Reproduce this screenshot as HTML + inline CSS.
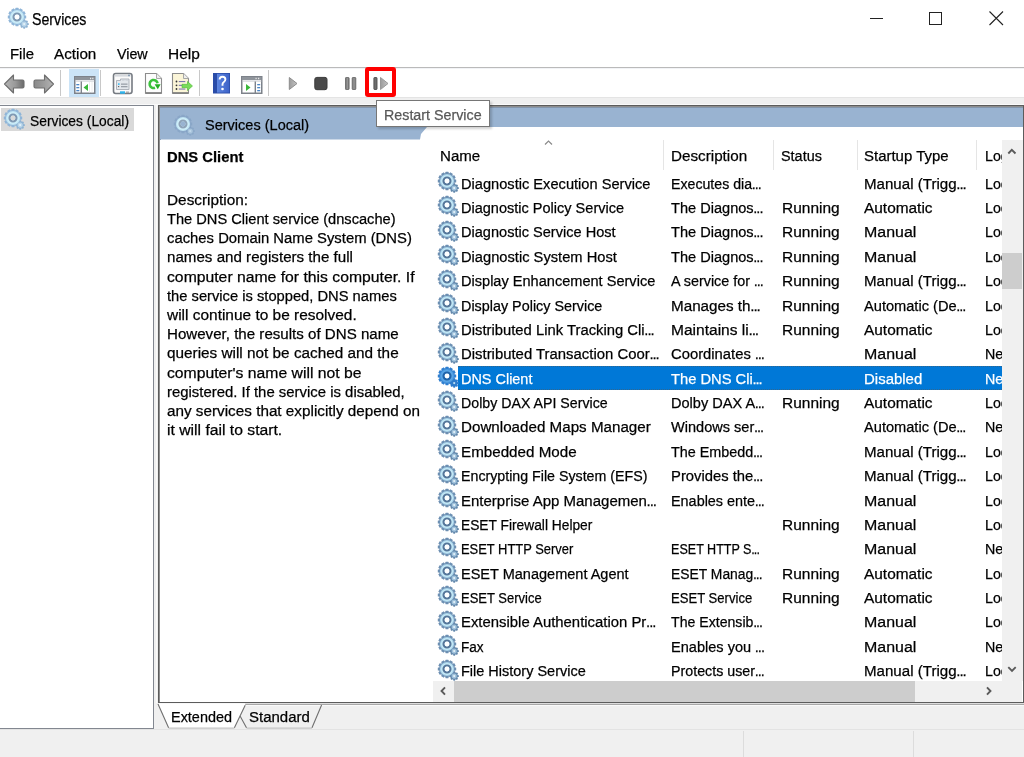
<!DOCTYPE html>
<html><head><meta charset="utf-8"><style>
.gS{--th:#2f7fd0;--sth:#2d7ccc;--sb:#2d7ccc;--sc:#bfe0f5;--rg:#4d9be0;--rg2:#5aa6e6;--dr:#1f62a8}
.gL{--th:#8fb5d8;--sth:#8fb3d3;--sb:#b9d6ea;--rg:#bfe3f3;--rg2:#cdeef9;--dr:#7f98b2}
.gF{--th:#7d9cc0;--to:0.55;--sth:#7f9fc2;--sb:#a9c4dc;--sc:#c0d8ea;--rg:#bfe2f2;--rg2:#d0f0fa;--dr:#8fa3b8}
*{margin:0;padding:0;box-sizing:border-box}
html,body{width:1024px;height:757px;overflow:hidden;background:#fff}
body{position:relative;font-family:"Liberation Sans",sans-serif;font-size:15px;color:#000}
.t{position:absolute;white-space:nowrap;line-height:17px;height:17px;-webkit-text-stroke:0.25px currentColor}
.a{position:absolute}
.el{letter-spacing:-1.1px;margin-left:-0.3px}
.t{transform-origin:0 0}
svg{position:absolute;overflow:visible}
</style></head><body>
<svg width="0" height="0" style="position:absolute">
<defs>
<radialGradient id="ring" cx="0.5" cy="0.5" r="0.5">
<stop offset="0.35" stop-color="#6e8fae"/><stop offset="0.55" stop-color="#cdebf7"/><stop offset="1" stop-color="#8db2d0"/>
</radialGradient>
<mask id="gh" maskUnits="userSpaceOnUse" x="-2" y="-2" width="24" height="24"><rect x="-2" y="-2" width="24" height="24" fill="#fff"/><circle cx="9" cy="9" r="2.4" fill="#000"/></mask>
<g id="gear" mask="url(#gh)">
<g style="fill:var(--th,#6c8fb2);opacity:var(--to,1)" transform="translate(9 9)"><circle r="7.9"/><rect x="-1.6" y="-9.2" width="3.2" height="18.4" rx="0.4" transform="rotate(0)"/><rect x="-1.6" y="-9.2" width="3.2" height="18.4" rx="0.4" transform="rotate(30)"/><rect x="-1.6" y="-9.2" width="3.2" height="18.4" rx="0.4" transform="rotate(60)"/><rect x="-1.6" y="-9.2" width="3.2" height="18.4" rx="0.4" transform="rotate(90)"/><rect x="-1.6" y="-9.2" width="3.2" height="18.4" rx="0.4" transform="rotate(120)"/><rect x="-1.6" y="-9.2" width="3.2" height="18.4" rx="0.4" transform="rotate(150)"/></g>
<g style="fill:var(--sth,#6287ab);opacity:var(--to,1)" transform="translate(16.2 16.1)"><circle r="3.6"/><rect x="-0.9" y="-4.6" width="1.8" height="9.2" transform="rotate(0)"/><rect x="-0.9" y="-4.6" width="1.8" height="9.2" transform="rotate(45)"/><rect x="-0.9" y="-4.6" width="1.8" height="9.2" transform="rotate(90)"/><rect x="-0.9" y="-4.6" width="1.8" height="9.2" transform="rotate(135)"/></g>
<circle cx="16.2" cy="16.1" r="2.6" style="fill:var(--sb,#9fc2dc)"/>
<circle cx="16.2" cy="16.1" r="1.1" style="fill:var(--sc,#e6f2f8)"/>
<circle cx="9" cy="9" r="7.1" style="fill:var(--rg,#a9d2ea)"/>
<circle cx="9" cy="9" r="6" style="fill:var(--rg2,#c6eaf7)"/>
<circle cx="9" cy="9" r="3.5" fill="none" style="stroke:var(--dr,#55769a)" stroke-width="2.1"/>
</g>
</defs></svg>
<svg style="left:7.5px;top:8px" width="20" height="20"><use href="#gear" class="gL"/></svg>
<div class="t " style="left:31.9px;top:11.26px;font-size:16px;transform:scaleX(0.887);">Services</div>
<div class="a" style="left:870px;top:18px;width:13px;height:1px;background:#222"></div>
<div class="a" style="left:929px;top:12px;width:13px;height:13px;border:1px solid #222"></div>
<svg style="left:989px;top:11px" width="15" height="15"><path d="M0.5 0.5L14 14M14 0.5L0.5 14" stroke="#222" stroke-width="1.1"/></svg>
<div class="t " style="left:10.3px;top:45.43px;font-size:15.5px;transform:scaleX(0.961);">File</div>
<div class="t " style="left:54.3px;top:45.43px;font-size:15.5px;transform:scaleX(0.983);">Action</div>
<div class="t " style="left:117.3px;top:45.43px;font-size:15.5px;transform:scaleX(0.921);">View</div>
<div class="t " style="left:167.6px;top:45.43px;font-size:15.5px;transform:scaleX(0.997);">Help</div>
<div class="a" style="left:0;top:67px;width:1024px;height:1px;background:#bababa"></div>
<div class="a" style="left:0;top:68px;width:1024px;height:1px;background:#f2f3f6"></div>
<div class="a" style="left:0;top:97px;width:1024px;height:8px;background:#efefef;border-top:1px solid #e4e4e4"></div>
<div class="a" style="left:60px;top:70px;width:1px;height:26px;background:#c8c8c8"></div>
<div class="a" style="left:100px;top:70px;width:1px;height:26px;background:#c8c8c8"></div>
<div class="a" style="left:199px;top:70px;width:1px;height:26px;background:#c8c8c8"></div>
<div class="a" style="left:268px;top:70px;width:1px;height:26px;background:#c8c8c8"></div>
<svg style="left:0;top:70px" width="60" height="27"><defs><linearGradient id="ab" x1="0" x2="1"><stop offset="0" stop-color="#b4b4b4"/><stop offset="0.55" stop-color="#9a9a9a"/><stop offset="1" stop-color="#6a6a6a"/></linearGradient><linearGradient id="af" x1="1" x2="0"><stop offset="0" stop-color="#b4b4b4"/><stop offset="0.55" stop-color="#9a9a9a"/><stop offset="1" stop-color="#8a8a8a"/></linearGradient></defs><path d="M4.5 14L13.5 5V10H22.5Q24 10 24 11.5V16.5Q24 18 22.5 18H13.5V23Z" fill="url(#ab)" stroke="#6e6e6e" stroke-width="1.1" stroke-linejoin="round"/><path d="M53.5 14L44.5 5V10H35.5Q34 10 34 11.5V16.5Q34 18 35.5 18H44.5V23Z" fill="url(#af)" stroke="#6e6e6e" stroke-width="1.1" stroke-linejoin="round"/></svg>
<div class="a" style="left:69px;top:69px;width:30px;height:28px;background:#cce4f7"></div>
<svg style="left:74px;top:76px" width="22" height="19"><rect x="0.75" y="0.75" width="20" height="16.5" fill="#fff" stroke="#7d828a" stroke-width="1.5"/><rect x="1" y="1" width="19.5" height="3" fill="#8f949b"/><rect x="16" y="1.8" width="1.2" height="1.4" fill="#e8e8e8"/><rect x="18.2" y="1.8" width="1.2" height="1.4" fill="#e8e8e8"/><rect x="1.5" y="4.6" width="19" height="0.9" fill="#c0c4ca"/><rect x="6.6" y="5.5" width="1.4" height="11.5" fill="#7d828a"/><rect x="2.3" y="8" width="3" height="1.3" fill="#4a86c8"/><rect x="2.3" y="11" width="3" height="1.3" fill="#4a86c8"/><rect x="2.3" y="14" width="3" height="1.3" fill="#4a86c8"/><path d="M9.5 11.5L14 8V15Z" fill="#3bb83b"/><path d="M15.5 6V16.5M18 6V16.5" stroke="#eaeaea" stroke-width="0.8"/></svg>
<svg style="left:112px;top:72px" width="22" height="23"><rect x="1.5" y="1.5" width="18.5" height="20" rx="2.2" fill="#fafafa" stroke="#767b82" stroke-width="1.6"/><rect x="3" y="3" width="15.5" height="1.6" fill="#d6d9de"/><rect x="16" y="2.6" width="2" height="1.6" fill="#8a9fb5"/><path d="M4.5 8.5H8.5V7H17V17.5H4.5Z" fill="#e3e7ec" stroke="#a7adb5" stroke-width="0.9"/><rect x="10" y="7.4" width="2.5" height="1.2" fill="#c9ced5"/><rect x="13.5" y="7.4" width="2.5" height="1.2" fill="#c9ced5"/><rect x="6" y="11.3" width="1.6" height="1.6" fill="#3bbcf5"/><rect x="9" y="11.5" width="6.5" height="1.3" fill="#9aa0a8"/><rect x="6" y="14.1" width="1.2" height="1" fill="#555"/><rect x="9" y="14" width="6.5" height="1.3" fill="#9aa0a8"/><rect x="8" y="19.3" width="5" height="2.4" fill="#2fb4ec"/><rect x="14" y="19.5" width="3" height="1.5" fill="#aaa"/></svg>
<svg style="left:144px;top:72px" width="20" height="23"><path d="M1.5 1.5H12.5L17.5 6.5V21.3H1.5Z" fill="#fdfdfd" stroke="#8c8c8c" stroke-width="1.1"/><path d="M1.5 21H17.5" stroke="#7a7a7a" stroke-width="1.6"/><path d="M12.5 1.5V6.5H17.5" fill="#eee" stroke="#a0a0a0" stroke-width="0.9"/><path d="M10.97 15.76A4 4 0 1 1 13.54 11.3" fill="none" stroke="#3cc23c" stroke-width="2.6"/><path d="M10.6 12.2H16.6L13.8 17.2Z" fill="#22b022"/></svg>
<svg style="left:171px;top:72px" width="24" height="23"><path d="M1.5 1.5H12.5L17.5 6.5V21.3H1.5Z" fill="#fbf5d8" stroke="#8c8c8c" stroke-width="1.1"/><path d="M1.5 21H17.5" stroke="#7a7a7a" stroke-width="1.6"/><path d="M12.5 1.5V6.5H17.5" fill="#eee" stroke="#a0a0a0" stroke-width="0.9"/><circle cx="5.5" cy="9.5" r="0.9" fill="#333"/><circle cx="5.5" cy="13.3" r="0.9" fill="#333"/><circle cx="5.5" cy="17" r="0.9" fill="#333"/><rect x="7.8" y="9" width="6.5" height="1.1" fill="#7b78b0"/><rect x="7.8" y="12.8" width="6.5" height="1.1" fill="#7b78b0"/><rect x="7.8" y="16.5" width="6.5" height="1.1" fill="#7b78b0"/><path d="M11 12.3H16.5V9.5L21.5 14L16.5 18.5V15.7H11Z" fill="#79dc5a" stroke="#4cb832" stroke-width="0.6"/></svg>
<svg style="left:213px;top:73px" width="17" height="21"><defs><linearGradient id="hb" x1="0" x2="1"><stop offset="0" stop-color="#5d86e0"/><stop offset="1" stop-color="#3d63c8"/></linearGradient></defs><rect x="0" y="0" width="17" height="20.5" fill="#2a4ca8"/><rect x="4" y="0.8" width="12.2" height="18.8" fill="url(#hb)"/><path d="M6.6 6.6Q6.6 3.7 9.5 3.7Q12.4 3.7 12.4 6.3Q12.4 8 10.6 9.3Q9.5 10 9.5 11.6V12.8" fill="none" stroke="#fff" stroke-width="1.9"/><circle cx="9.5" cy="16" r="1.3" fill="#fff"/></svg>
<svg style="left:241px;top:76px" width="22" height="19"><rect x="0.75" y="0.75" width="20" height="16.5" fill="#fff" stroke="#7d828a" stroke-width="1.5"/><rect x="1" y="1" width="19.5" height="3" fill="#8f949b"/><rect x="14.5" y="1.8" width="1.2" height="1.4" fill="#e8e8e8"/><rect x="17" y="1.8" width="1.2" height="1.4" fill="#e8e8e8"/><rect x="1.5" y="4.6" width="19" height="0.9" fill="#c0c4ca"/><rect x="13.6" y="5.5" width="1.4" height="11.5" fill="#7d828a"/><rect x="16.2" y="8" width="3" height="1.3" fill="#4a86c8"/><rect x="16.2" y="11" width="3" height="1.3" fill="#4a86c8"/><rect x="16.2" y="14" width="3" height="1.3" fill="#4a86c8"/><path d="M5 8V15L9.5 11.5Z" fill="#3bb83b"/></svg>
<svg style="left:280px;top:70px" width="120" height="27"><defs><linearGradient id="pg" x1="0" x2="1"><stop offset="0" stop-color="#9c9c9c"/><stop offset="1" stop-color="#c4c4c4"/></linearGradient><linearGradient id="pb" x1="0" x2="1"><stop offset="0" stop-color="#666"/><stop offset="0.5" stop-color="#9a9a9a"/><stop offset="1" stop-color="#6a6a6a"/></linearGradient></defs><path d="M9.3 7.5L17 13.5L9.3 19.5Z" fill="url(#pg)" stroke="#8d8d8d" stroke-width="1" stroke-linejoin="round"/><rect x="34.8" y="7.4" width="12.2" height="12.3" rx="2" fill="#4a4a4a" stroke="#3a3a3a" stroke-width="1"/><rect x="65.5" y="7.5" width="3.6" height="12" rx="0.6" fill="url(#pb)" stroke="#6d6d6d" stroke-width="0.9"/><rect x="72.2" y="7.5" width="3.6" height="12" rx="0.6" fill="url(#pb)" stroke="#6d6d6d" stroke-width="0.9"/><rect x="93.9" y="7.5" width="3.1" height="12" rx="0.6" fill="#6d6d6d" stroke="#4d4d4d" stroke-width="0.9"/><path d="M100.5 7.5L108 13.5L100.5 19.5Z" fill="url(#pg)" stroke="#999" stroke-width="1" stroke-linejoin="round"/></svg>
<div class="a" style="left:365px;top:67px;width:31px;height:30px;border:4px solid #ff0000;border-radius:3px"></div>
<div class="a" style="left:0;top:105px;width:154px;height:624px;border:1px solid #828790;border-left:none;background:#fff"></div>
<div class="a" style="left:1px;top:108px;width:133px;height:23px;background:#d9d9d9"></div>
<svg style="left:3.8px;top:108.8px" width="20" height="20"><use href="#gear" class="gL"/></svg>
<div class="t " style="left:30.4px;top:111.63px;font-size:15.5px;transform:scaleX(0.891);">Services (Local)</div>
<div class="a" style="left:154px;top:105px;width:4px;height:624px;background:#f0f0f0"></div>
<div class="a" style="left:0;top:104px;width:1024px;height:1px;background:#fafafa"></div>
<div class="a" style="left:156px;top:104px;width:1px;height:599px;background:#fafafa"></div>
<div class="a" style="left:158px;top:105px;width:866px;height:598px;border:1px solid #5c5c5c;background:#fff"></div>
<div class="a" style="left:159px;top:106px;width:864px;height:1px;background:#8e8e8e"></div>
<div class="a" style="left:159px;top:106px;width:1px;height:596px;background:#8e8e8e"></div>
<div class="a" style="left:160px;top:107px;width:863px;height:1px;background:#8395ab"></div>
<div class="a" style="left:160px;top:107px;width:1px;height:33px;background:#8395ab"></div>
<svg style="left:160px;top:108px" width="863" height="32"><path d="M0 0H863V19H267L261 26L260 31.5H0Z" fill="#99b3d1"/></svg>
<svg style="left:174px;top:115px" width="20" height="20"><use href="#gear" class="gF"/></svg>
<div class="t " style="left:204.8px;top:116.23px;font-size:15.5px;transform:scaleX(0.937);">Services (Local)</div>
<div class="t " style="left:166.7px;top:148.43px;font-size:15.5px;transform:scaleX(0.953);font-weight:bold">DNS Client</div>
<div class="t " style="left:166.71px;top:190.83px;font-size:15.5px;transform:scaleX(0.9913);">Description:</div>
<div class="t " style="left:166.76px;top:210.03px;font-size:15.5px;transform:scaleX(0.9444);">The DNS Client service (dnscache)</div>
<div class="t " style="left:166.74px;top:229.23px;font-size:15.5px;transform:scaleX(0.9571);">caches Domain Name System (DNS)</div>
<div class="t " style="left:166.72px;top:248.43px;font-size:15.5px;transform:scaleX(0.9767);">names and registers the full</div>
<div class="t " style="left:166.68px;top:267.63px;font-size:15.5px;transform:scaleX(1.0156);">computer name for this computer. If</div>
<div class="t " style="left:166.75px;top:286.83px;font-size:15.5px;transform:scaleX(0.9492);">the service is stopped, DNS names</div>
<div class="t " style="left:166.7px;top:306.03px;font-size:15.5px;transform:scaleX(0.9963);">will continue to be resolved.</div>
<div class="t " style="left:166.73px;top:325.23px;font-size:15.5px;transform:scaleX(0.9746);">However, the results of DNS name</div>
<div class="t " style="left:166.71px;top:344.43px;font-size:15.5px;transform:scaleX(0.9884);">queries will not be cached and the</div>
<div class="t " style="left:166.68px;top:363.63px;font-size:15.5px;transform:scaleX(1.0153);">computer's name will not be</div>
<div class="t " style="left:166.74px;top:382.83px;font-size:15.5px;transform:scaleX(0.9616);">registered. If the service is disabled,</div>
<div class="t " style="left:166.71px;top:402.03px;font-size:15.5px;transform:scaleX(0.9855);">any services that explicitly depend on</div>
<div class="t " style="left:166.69px;top:421.23px;font-size:15.5px;transform:scaleX(1.0134);">it will fail to start.</div>
<svg style="left:544px;top:140px" width="10" height="6"><path d="M1 4.5L4.5 1L8 4.5" fill="none" stroke="#8a8a8a" stroke-width="1.2"/></svg>
<div class="a" style="left:663px;top:140px;width:1px;height:30px;background:#e5e5e5"></div>
<div class="a" style="left:773px;top:140px;width:1px;height:30px;background:#e5e5e5"></div>
<div class="a" style="left:857px;top:140px;width:1px;height:30px;background:#e5e5e5"></div>
<div class="a" style="left:976px;top:140px;width:1px;height:30px;background:#e5e5e5"></div>
<div class="a" style="left:0;top:0;width:1002px;height:757px;overflow:hidden">
<div class="t " style="left:440.1px;top:147.43px;font-size:15.5px;transform:scaleX(0.9725);">Name</div>
<div class="t " style="left:671.0px;top:147.43px;font-size:15.5px;transform:scaleX(0.982);">Description</div>
<div class="t " style="left:781.4px;top:147.43px;font-size:15.5px;transform:scaleX(0.93);">Status</div>
<div class="t " style="left:864.4px;top:147.43px;font-size:15.5px;transform:scaleX(0.966);">Startup Type</div>
<div class="t " style="left:984.7px;top:147.43px;font-size:15.5px;transform:scaleX(0.92);">Log On As</div>
</div>
<div class="a" style="left:433px;top:140px;width:569px;height:541px;overflow:hidden" id="rows">
<svg style="left:4.5px;top:32.00px" width="20" height="20"><use href="#gear" class=""/></svg>
<div class="t " style="left:27.96px;top:34.73px;font-size:15.5px;transform:scaleX(0.9437);">Diagnostic Execution Service</div>
<div class="t " style="left:237.89px;top:34.73px;font-size:15.5px;transform:scaleX(0.9134);">Executes dia<span class="el">...</span></div>
<div class="t " style="left:431.43px;top:34.73px;font-size:15.5px;transform:scaleX(0.9738);">Manual (Trigg<span class="el">...</span></div>
<div class="t " style="left:551.68px;top:34.73px;font-size:15.5px;transform:scaleX(0.92);">Local System</div>
<svg style="left:4.5px;top:56.38px" width="20" height="20"><use href="#gear" class=""/></svg>
<div class="t " style="left:27.96px;top:59.10px;font-size:15.5px;transform:scaleX(0.937);">Diagnostic Policy Service</div>
<div class="t " style="left:237.86px;top:59.10px;font-size:15.5px;transform:scaleX(0.9402);">The Diagnos<span class="el">...</span></div>
<div class="t " style="left:348.8px;top:59.10px;font-size:15.5px;transform:scaleX(0.9982);">Running</div>
<div class="t " style="left:431.41px;top:59.10px;font-size:15.5px;transform:scaleX(0.9941);">Automatic</div>
<div class="t " style="left:551.68px;top:59.10px;font-size:15.5px;transform:scaleX(0.92);">Local System</div>
<svg style="left:4.5px;top:80.75px" width="20" height="20"><use href="#gear" class=""/></svg>
<div class="t " style="left:27.96px;top:83.48px;font-size:15.5px;transform:scaleX(0.9396);">Diagnostic Service Host</div>
<div class="t " style="left:237.86px;top:83.48px;font-size:15.5px;transform:scaleX(0.9402);">The Diagnos<span class="el">...</span></div>
<div class="t " style="left:348.8px;top:83.48px;font-size:15.5px;transform:scaleX(0.9982);">Running</div>
<div class="t " style="left:431.37px;top:83.48px;font-size:15.5px;transform:scaleX(1.0286);">Manual</div>
<div class="t " style="left:551.68px;top:83.48px;font-size:15.5px;transform:scaleX(0.92);">Local System</div>
<svg style="left:4.5px;top:105.12px" width="20" height="20"><use href="#gear" class=""/></svg>
<div class="t " style="left:27.95px;top:107.85px;font-size:15.5px;transform:scaleX(0.947);">Diagnostic System Host</div>
<div class="t " style="left:237.86px;top:107.85px;font-size:15.5px;transform:scaleX(0.9402);">The Diagnos<span class="el">...</span></div>
<div class="t " style="left:348.8px;top:107.85px;font-size:15.5px;transform:scaleX(0.9982);">Running</div>
<div class="t " style="left:431.37px;top:107.85px;font-size:15.5px;transform:scaleX(1.0286);">Manual</div>
<div class="t " style="left:551.68px;top:107.85px;font-size:15.5px;transform:scaleX(0.92);">Local System</div>
<svg style="left:4.5px;top:129.50px" width="20" height="20"><use href="#gear" class=""/></svg>
<div class="t " style="left:27.96px;top:132.23px;font-size:15.5px;transform:scaleX(0.9395);">Display Enhancement Service</div>
<div class="t " style="left:237.87px;top:132.23px;font-size:15.5px;transform:scaleX(0.9263);">A service for <span class="el">...</span></div>
<div class="t " style="left:348.8px;top:132.23px;font-size:15.5px;transform:scaleX(0.9982);">Running</div>
<div class="t " style="left:431.43px;top:132.23px;font-size:15.5px;transform:scaleX(0.9738);">Manual (Trigg<span class="el">...</span></div>
<div class="t " style="left:551.68px;top:132.23px;font-size:15.5px;transform:scaleX(0.92);">Local System</div>
<svg style="left:4.5px;top:153.88px" width="20" height="20"><use href="#gear" class=""/></svg>
<div class="t " style="left:27.97px;top:156.60px;font-size:15.5px;transform:scaleX(0.9272);">Display Policy Service</div>
<div class="t " style="left:237.82px;top:156.60px;font-size:15.5px;transform:scaleX(0.982);">Manages th<span class="el">...</span></div>
<div class="t " style="left:348.8px;top:156.60px;font-size:15.5px;transform:scaleX(0.9982);">Running</div>
<div class="t " style="left:431.46px;top:156.60px;font-size:15.5px;transform:scaleX(0.943);">Automatic (De<span class="el">...</span></div>
<div class="t " style="left:551.68px;top:156.60px;font-size:15.5px;transform:scaleX(0.92);">Local System</div>
<svg style="left:4.5px;top:178.25px" width="20" height="20"><use href="#gear" class=""/></svg>
<div class="t " style="left:27.94px;top:180.98px;font-size:15.5px;transform:scaleX(0.956);">Distributed Link Tracking Cli<span class="el">...</span></div>
<div class="t " style="left:237.8px;top:180.98px;font-size:15.5px;transform:scaleX(1.0023);">Maintains li<span class="el">...</span></div>
<div class="t " style="left:348.8px;top:180.98px;font-size:15.5px;transform:scaleX(0.9982);">Running</div>
<div class="t " style="left:431.41px;top:180.98px;font-size:15.5px;transform:scaleX(0.9941);">Automatic</div>
<div class="t " style="left:551.68px;top:180.98px;font-size:15.5px;transform:scaleX(0.92);">Local System</div>
<svg style="left:4.5px;top:202.62px" width="20" height="20"><use href="#gear" class=""/></svg>
<div class="t " style="left:27.94px;top:205.35px;font-size:15.5px;transform:scaleX(0.9605);">Distributed Transaction Coor<span class="el">...</span></div>
<div class="t " style="left:237.84px;top:205.35px;font-size:15.5px;transform:scaleX(0.9552);">Coordinates <span class="el">...</span></div>
<div class="t " style="left:431.37px;top:205.35px;font-size:15.5px;transform:scaleX(1.0286);">Manual</div>
<div class="t " style="left:551.68px;top:205.35px;font-size:15.5px;transform:scaleX(0.92);">Network Service</div>
<div class="a" style="left:25px;top:226.20px;width:544px;height:23.4px;background:#0078d7;border-top:1px dotted rgba(110,80,50,0.45);border-bottom:1px dotted rgba(110,80,50,0.45)"></div>
<svg style="left:4.5px;top:227.00px" width="20" height="20"><use href="#gear" class="gS"/></svg>
<div class="t " style="left:27.97px;top:229.73px;font-size:15.5px;transform:scaleX(0.9316);color:#fff;">DNS Client</div>
<div class="t " style="left:237.85px;top:229.73px;font-size:15.5px;transform:scaleX(0.9495);color:#fff;">The DNS Cli<span class="el">...</span></div>
<div class="t " style="left:431.43px;top:229.73px;font-size:15.5px;transform:scaleX(0.9661);color:#fff;">Disabled</div>
<div class="t " style="left:551.68px;top:229.73px;font-size:15.5px;transform:scaleX(0.92);color:#fff;">Network Service</div>
<svg style="left:4.5px;top:251.38px" width="20" height="20"><use href="#gear" class=""/></svg>
<div class="t " style="left:27.98px;top:254.10px;font-size:15.5px;transform:scaleX(0.9151);">Dolby DAX API Service</div>
<div class="t " style="left:237.86px;top:254.10px;font-size:15.5px;transform:scaleX(0.9388);">Dolby DAX A<span class="el">...</span></div>
<div class="t " style="left:348.8px;top:254.10px;font-size:15.5px;transform:scaleX(0.9982);">Running</div>
<div class="t " style="left:431.41px;top:254.10px;font-size:15.5px;transform:scaleX(0.9941);">Automatic</div>
<div class="t " style="left:551.68px;top:254.10px;font-size:15.5px;transform:scaleX(0.92);">Local System</div>
<svg style="left:4.5px;top:275.75px" width="20" height="20"><use href="#gear" class=""/></svg>
<div class="t " style="left:27.92px;top:278.48px;font-size:15.5px;transform:scaleX(0.9788);">Downloaded Maps Manager</div>
<div class="t " style="left:237.86px;top:278.48px;font-size:15.5px;transform:scaleX(0.9388);">Windows ser<span class="el">...</span></div>
<div class="t " style="left:431.46px;top:278.48px;font-size:15.5px;transform:scaleX(0.943);">Automatic (De<span class="el">...</span></div>
<div class="t " style="left:551.68px;top:278.48px;font-size:15.5px;transform:scaleX(0.92);">Network Service</div>
<svg style="left:4.5px;top:300.12px" width="20" height="20"><use href="#gear" class=""/></svg>
<div class="t " style="left:27.92px;top:302.85px;font-size:15.5px;transform:scaleX(0.9795);">Embedded Mode</div>
<div class="t " style="left:237.87px;top:302.85px;font-size:15.5px;transform:scaleX(0.9276);">The Embedd<span class="el">...</span></div>
<div class="t " style="left:431.43px;top:302.85px;font-size:15.5px;transform:scaleX(0.9738);">Manual (Trigg<span class="el">...</span></div>
<div class="t " style="left:551.68px;top:302.85px;font-size:15.5px;transform:scaleX(0.92);">Local System</div>
<svg style="left:4.5px;top:324.50px" width="20" height="20"><use href="#gear" class=""/></svg>
<div class="t " style="left:27.98px;top:327.23px;font-size:15.5px;transform:scaleX(0.9169);">Encrypting File System (EFS)</div>
<div class="t " style="left:237.84px;top:327.23px;font-size:15.5px;transform:scaleX(0.9553);">Provides the<span class="el">...</span></div>
<div class="t " style="left:431.43px;top:327.23px;font-size:15.5px;transform:scaleX(0.9738);">Manual (Trigg<span class="el">...</span></div>
<div class="t " style="left:551.68px;top:327.23px;font-size:15.5px;transform:scaleX(0.92);">Local System</div>
<svg style="left:4.5px;top:348.88px" width="20" height="20"><use href="#gear" class=""/></svg>
<div class="t " style="left:27.93px;top:351.60px;font-size:15.5px;transform:scaleX(0.9675);">Enterprise App Managemen<span class="el">...</span></div>
<div class="t " style="left:237.87px;top:351.60px;font-size:15.5px;transform:scaleX(0.9293);">Enables ente<span class="el">...</span></div>
<div class="t " style="left:431.37px;top:351.60px;font-size:15.5px;transform:scaleX(1.0286);">Manual</div>
<div class="t " style="left:551.68px;top:351.60px;font-size:15.5px;transform:scaleX(0.92);">Local System</div>
<svg style="left:4.5px;top:373.25px" width="20" height="20"><use href="#gear" class=""/></svg>
<div class="t " style="left:28.01px;top:375.98px;font-size:15.5px;transform:scaleX(0.8884);">ESET Firewall Helper</div>
<div class="t " style="left:348.8px;top:375.98px;font-size:15.5px;transform:scaleX(0.9982);">Running</div>
<div class="t " style="left:431.37px;top:375.98px;font-size:15.5px;transform:scaleX(1.0286);">Manual</div>
<div class="t " style="left:551.68px;top:375.98px;font-size:15.5px;transform:scaleX(0.92);">Local System</div>
<svg style="left:4.5px;top:397.62px" width="20" height="20"><use href="#gear" class=""/></svg>
<div class="t " style="left:28.07px;top:400.35px;font-size:15.5px;transform:scaleX(0.8336);">ESET HTTP Server</div>
<div class="t " style="left:237.99px;top:400.35px;font-size:15.5px;transform:scaleX(0.8102);">ESET HTTP S<span class="el">...</span></div>
<div class="t " style="left:431.37px;top:400.35px;font-size:15.5px;transform:scaleX(1.0286);">Manual</div>
<div class="t " style="left:551.68px;top:400.35px;font-size:15.5px;transform:scaleX(0.92);">Network Service</div>
<svg style="left:4.5px;top:422.00px" width="20" height="20"><use href="#gear" class=""/></svg>
<div class="t " style="left:27.96px;top:424.73px;font-size:15.5px;transform:scaleX(0.9365);">ESET Management Agent</div>
<div class="t " style="left:237.9px;top:424.73px;font-size:15.5px;transform:scaleX(0.895);">ESET Manag<span class="el">...</span></div>
<div class="t " style="left:348.8px;top:424.73px;font-size:15.5px;transform:scaleX(0.9982);">Running</div>
<div class="t " style="left:431.41px;top:424.73px;font-size:15.5px;transform:scaleX(0.9941);">Automatic</div>
<div class="t " style="left:551.68px;top:424.73px;font-size:15.5px;transform:scaleX(0.92);">Local System</div>
<svg style="left:4.5px;top:446.38px" width="20" height="20"><use href="#gear" class=""/></svg>
<div class="t " style="left:28.06px;top:449.10px;font-size:15.5px;transform:scaleX(0.8389);">ESET Service</div>
<div class="t " style="left:237.96px;top:449.10px;font-size:15.5px;transform:scaleX(0.8442);">ESET Service</div>
<div class="t " style="left:348.8px;top:449.10px;font-size:15.5px;transform:scaleX(0.9982);">Running</div>
<div class="t " style="left:431.41px;top:449.10px;font-size:15.5px;transform:scaleX(0.9941);">Automatic</div>
<div class="t " style="left:551.68px;top:449.10px;font-size:15.5px;transform:scaleX(0.92);">Local System</div>
<svg style="left:4.5px;top:470.75px" width="20" height="20"><use href="#gear" class=""/></svg>
<div class="t " style="left:27.94px;top:473.48px;font-size:15.5px;transform:scaleX(0.9602);">Extensible Authentication Pr<span class="el">...</span></div>
<div class="t " style="left:237.89px;top:473.48px;font-size:15.5px;transform:scaleX(0.911);">The Extensib<span class="el">...</span></div>
<div class="t " style="left:431.37px;top:473.48px;font-size:15.5px;transform:scaleX(1.0286);">Manual</div>
<div class="t " style="left:551.68px;top:473.48px;font-size:15.5px;transform:scaleX(0.92);">Local System</div>
<svg style="left:4.5px;top:495.12px" width="20" height="20"><use href="#gear" class=""/></svg>
<div class="t " style="left:28.02px;top:497.85px;font-size:15.5px;transform:scaleX(0.875);">Fax</div>
<div class="t " style="left:237.86px;top:497.85px;font-size:15.5px;transform:scaleX(0.9388);">Enables you <span class="el">...</span></div>
<div class="t " style="left:431.37px;top:497.85px;font-size:15.5px;transform:scaleX(1.0286);">Manual</div>
<div class="t " style="left:551.68px;top:497.85px;font-size:15.5px;transform:scaleX(0.92);">Network Service</div>
<svg style="left:4.5px;top:519.50px" width="20" height="20"><use href="#gear" class=""/></svg>
<div class="t " style="left:27.97px;top:522.23px;font-size:15.5px;transform:scaleX(0.9341);">File History Service</div>
<div class="t " style="left:237.88px;top:522.23px;font-size:15.5px;transform:scaleX(0.92);">Protects user<span class="el">...</span></div>
<div class="t " style="left:431.43px;top:522.23px;font-size:15.5px;transform:scaleX(0.9738);">Manual (Trigg<span class="el">...</span></div>
<div class="t " style="left:551.68px;top:522.23px;font-size:15.5px;transform:scaleX(0.92);">Local System</div>
</div>
<div class="a" style="left:1002px;top:140px;width:21px;height:541px;background:#f0f0f0"></div>
<div class="a" style="left:1002px;top:253px;width:20px;height:36px;background:#cdcdcd"></div>
<svg style="left:1007px;top:148px" width="10" height="7"><path d="M1.3 5.5L4.8 1.8L8.5 5.5" fill="none" stroke="#5a5a5a" stroke-width="1.9"/></svg>
<svg style="left:1007px;top:666px" width="10" height="7"><path d="M1.3 1.2L5 4.9L8.7 1.2" fill="none" stroke="#5a5a5a" stroke-width="1.9"/></svg>
<div class="a" style="left:433px;top:681px;width:589px;height:21px;background:#f0f0f0"></div>
<div class="a" style="left:454px;top:681px;width:461px;height:21px;background:#cdcdcd"></div>
<svg style="left:440px;top:686px" width="6" height="10"><path d="M5 1.3L1.5 5L5 8.7" fill="none" stroke="#5a5a5a" stroke-width="1.9"/></svg>
<svg style="left:986px;top:686px" width="6" height="10"><path d="M1 1.3L4.5 5L1 8.7" fill="none" stroke="#5a5a5a" stroke-width="1.9"/></svg>
<div class="a" style="left:158px;top:703px;width:866px;height:26px;background:#f0f0f0"></div>
<svg style="left:0;top:0" width="1024" height="757"><path d="M239.8 715L246.5 728H312L321.6 705.2H245.2Z" fill="#f0f0f0"/><path d="M158 703.5L168.6 728H234.4L245.2 705.2L245.2 703.5Z" fill="#fff"/><path d="M168.6 728.2H234.4M246.5 728.2H312" stroke="#c4c4c4" stroke-width="1.2"/><path d="M245.2 703.5H1024" stroke="#dcdcdc" stroke-width="1"/><path d="M245.2 704.5H1024" stroke="#a8a8a8" stroke-width="1"/><path d="M246 705.5H1024" stroke="#fafafa" stroke-width="1"/><path d="M158 704L168.6 727.8M234.4 727.8L245.2 705.2M321.6 705L312 727.8M239.8 715.5L246.5 727.8" fill="none" stroke="#707070" stroke-width="1.1"/></svg>
<div class="t " style="left:170.9px;top:708.13px;font-size:15.5px;transform:scaleX(0.931);">Extended</div>
<div class="t " style="left:248.5px;top:708.13px;font-size:15.5px;transform:scaleX(0.966);">Standard</div>
<div class="a" style="left:0;top:729px;width:1024px;height:28px;background:#f0f0f0;border-top:1px solid #e3e3e3"></div>
<div class="a" style="left:743px;top:731px;width:1px;height:26px;background:#dcdcdc"></div>
<div class="a" style="left:913px;top:731px;width:1px;height:26px;background:#dcdcdc"></div>
<div class="a" style="left:378px;top:102px;width:114px;height:27px;background:rgba(0,0,0,0.18);filter:blur(1px)"></div>
<div class="a" style="left:376px;top:100px;width:114px;height:27px;background:#fff;border:1px solid #767676"></div>
<div class="t " style="left:383.7px;top:106.23px;font-size:15.5px;transform:scaleX(0.921);color:#575757">Restart Service</div>
</body></html>
